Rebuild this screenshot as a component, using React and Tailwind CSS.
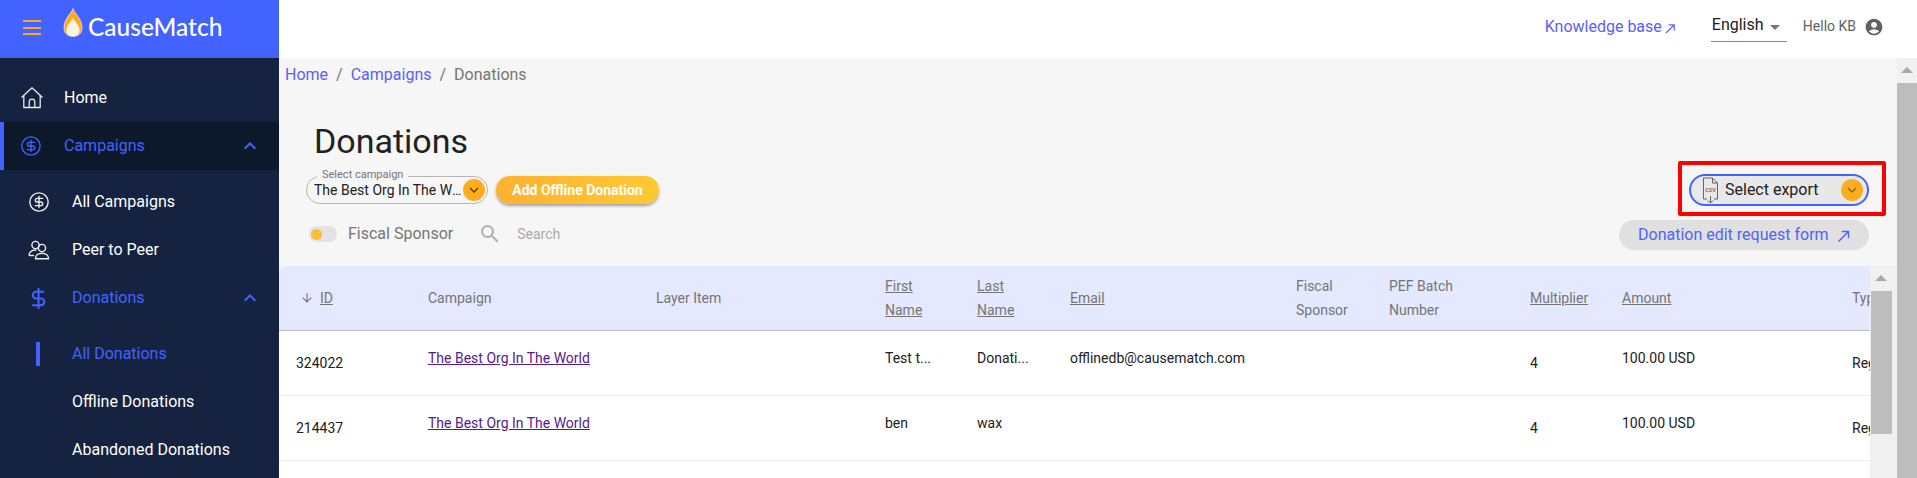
import React from "react";
import { CircleDollarSign, DollarSign } from "lucide-react";
import { MdAccountCircle, MdArrowDropDown, MdNorthEast, MdSearch, MdArrowDownward, MdExpandLess, MdExpandMore } from "react-icons/md";

const Flame = () => (
  <svg width="20" height="30" viewBox="0 0 20 30" className="shrink-0">
    <path d="M10 0.5C11 5 19 10.5 19 19.5C19 25.5 15 28.5 10 28.5C5 28.5 1 25.5 1 19.5C1 10.5 9 5 10 0.5Z" fill="#ffa91f" stroke="#fff" strokeWidth="0.6" />
    <path d="M10 10C12 14 16.5 17 16.5 22C16.5 26 13.5 28 10 28C6.5 28 3.5 26 3.5 22C3.5 17 8 14 10 10Z" fill="#fdf3e4" />
  </svg>
);

const HomeIcon = () => (
  <svg width="24" height="24" viewBox="0 0 24 24" fill="none" stroke="#e8e8e8" strokeWidth="1.3" strokeLinejoin="round" className="shrink-0">
    <path d="M1.5 11.5L12 1.8L22.5 11.5" />
    <path d="M3.8 9.5V21.5H20.2V9.5" />
    <path d="M9.2 21.5V16a2.8 2.8 0 0 1 5.6 0v5.5" />
  </svg>
);

const PeerIcon = () => (
  <svg width="22" height="20" viewBox="0 0 22 20" fill="none" stroke="#f0f0f0" strokeWidth="1.4" className="shrink-0">
    <circle cx="7.5" cy="5" r="3.6" />
    <circle cx="14" cy="8" r="3.6" />
    <path d="M1 15.5c0-3.5 3-5.5 6-5.5h1.5" />
    <path d="M1 15.5h5" />
    <path d="M7.5 18.7c0-3.5 3-5.5 6.5-5.5s6.5 2 6.5 5.5z" />
  </svg>
);

const CsvIcon = () => (
  <svg width="17" height="27" viewBox="0 0 17 27" fill="none" stroke="#555" strokeWidth="0.9" className="shrink-0">
    <path d="M1.5 18V1H10.5L15.5 6V18" />
    <path d="M10.5 1V6H15.5" />
    <path d="M1.5 18V22H5M12 22H15.5V18" />
    <text x="8.5" y="15" fontSize="5.5" fontWeight="700" fill="#8a6d6d" stroke="none" textAnchor="middle" fontFamily="Roboto, sans-serif">CSV</text>
    <path d="M8.5 19V26M6 23.5L8.5 26L11 23.5" />
  </svg>
);

const SideItem = ({ icon, label, active, bar, indent, chevron, dark }) => (
  <div className={`relative flex h-12 items-center text-[16px] ${dark ? "bg-[#0e182b]" : ""} ${active ? "text-[#4263ff]" : "text-white"} ${indent ? "pl-[28px]" : "pl-[20px]"}`}>
    {bar === "edge" && <span className="absolute left-0 top-0 h-full w-1 bg-[#4263ff]" />}
    {bar === "sub" && <span className="absolute left-9 top-3 h-6 w-1 bg-[#4263ff]" />}
    <span className="flex w-[44px] shrink-0 items-center">{icon}</span>
    <span>{label}</span>
    {chevron && <MdExpandLess className="absolute right-[17px] top-[12px] text-[#4263ff]" size={24} />}
  </div>
);

const cols = ["w-[132px]", "w-[228px]", "w-[229px]", "w-[92px]", "w-[93px]", "w-[226px]", "w-[93px]", "w-[141px]", "w-[92px]", "w-[230px]", "w-[100px]"];

const headers = [
  <span className="flex items-center"><MdArrowDownward size={14} className="ml-[4px] mr-[6px] text-[#757575]" /><u>ID</u></span>,
  "Campaign",
  "Layer Item",
  <u>First<br />Name</u>,
  <u>Last<br />Name</u>,
  <u>Email</u>,
  <>Fiscal<br />Sponsor</>,
  <>PEF Batch<br />Number</>,
  <u>Multiplier</u>,
  <u>Amount</u>,
  "Type",
];

const Cell = ({ i, top, children }) => (
  <div className={`${cols[i]} shrink-0 pl-[17px] ${top ? "pt-[15px]" : "pt-[20px]"}`}>{children}</div>
);

const Row = ({ id, first, last, email }) => (
  <div className="flex h-[65px] border-b border-[#ededed] bg-white text-[14px] leading-[24px] text-[#212121]">
    <Cell i={0}>{id}</Cell>
    <Cell i={1} top><a className="text-[#551a8b] underline">The Best Org In The World</a></Cell>
    <Cell i={2} top />
    <Cell i={3} top>{first}</Cell>
    <Cell i={4} top>{last}</Cell>
    <Cell i={5} top>{email}</Cell>
    <Cell i={6} top />
    <Cell i={7} top />
    <Cell i={8}>4</Cell>
    <Cell i={9} top>100.00 USD</Cell>
    <Cell i={10}>Regular</Cell>
  </div>
);

const OrangeDot = ({ dark }) => (
  <span className="flex h-[22px] w-[22px] shrink-0 items-center justify-center rounded-full bg-[#ffad1f]">
    <MdExpandMore size={18} className={dark ? "text-[#5a4210]" : "text-[#8a6a20]"} />
  </span>
);

export default function App() {
  return (
    <div className="flex h-[478px] w-[1917px] flex-col overflow-hidden bg-white font-['Roboto',sans-serif]">
      <header className="flex h-[58px] shrink-0">
        <div className="flex w-[279px] shrink-0 items-start bg-[#4263ff]">
          <div className="ml-[23px] mt-[20px] flex w-[18px] flex-col gap-[4.5px]">
            <span className="h-[2px] bg-[#ffa91f]" />
            <span className="h-[2px] bg-[#ffa91f]" />
            <span className="h-[2px] bg-[#ffa91f]" />
          </div>
          <div className="ml-[22px] mt-[8px] flex items-start">
            <Flame />
            <span className="ml-[5px] mt-[1px] font-['Lato',sans-serif] text-[24.5px] leading-[36px] font-medium text-white">CauseMatch</span>
          </div>
        </div>
        <div className="flex flex-1 items-center justify-end pb-[4px]">
          <a className="flex items-center text-[16px] text-[#5a60ff]">Knowledge base<MdNorthEast size={15} className="ml-[1px] mt-[2px]" /></a>
          <div className="ml-[33px] flex h-[42px] w-[76px] items-start self-start border-b border-[#8a8a8a] pl-[1px] pt-[15px] text-[16px] leading-[20px] text-[#212121]">
            <span>English</span>
            <MdArrowDropDown size={24} className="ml-[-1px] text-[#757575]" />
          </div>
          <span className="ml-4 mb-[2px] text-[14px] text-[#616161]">Hello KB</span>
          <MdAccountCircle size={20} className="ml-[8px] mr-[33px] text-[#616161]" />
        </div>
      </header>

      <div className="flex min-h-0 flex-1">
        <aside className="w-[279px] shrink-0 bg-[#152341] pt-[16px]">
          <SideItem icon={<HomeIcon />} label="Home" />
          <SideItem icon={<CircleDollarSign size={22} strokeWidth={1.5} />} label="Campaigns" active dark bar="edge" chevron />
          <div className="h-[8px]" />
          <SideItem indent icon={<CircleDollarSign size={22} strokeWidth={1.5} className="text-[#eee]" />} label="All Campaigns" />
          <SideItem indent icon={<PeerIcon />} label="Peer to Peer" />
          <SideItem indent icon={<DollarSign size={23} strokeWidth={2.2} className="ml-[-1px]" />} label="Donations" active chevron />
          <div className="h-[8px]" />
          <SideItem indent icon={null} label="All Donations" active bar="sub" />
          <SideItem indent icon={null} label="Offline Donations" />
          <SideItem indent icon={null} label="Abandoned Donations" />
        </aside>

        <main className="flex min-w-0 flex-1 flex-col bg-[#f6f6f6]">
          <div className="h-[208px] shrink-0">
            <nav className="flex h-[34px] items-center pl-[6px] text-[16px] text-[#757575]">
              <a className="text-[#5a60ff]">Home</a>
              <span className="mx-[8px]">/</span>
              <a className="text-[#5a60ff]">Campaigns</a>
              <span className="mx-[8px]">/</span>
              <span>Donations</span>
            </nav>
            <div className="flex justify-between">
              <div>
                <h1 className="ml-[35px] mt-[29px] text-[34px] leading-[40px] font-normal text-[#212121]">Donations</h1>
                <div className="ml-[27px] mt-[15px] flex items-center gap-2">
                  <div className="relative flex h-[28px] w-[182px] items-center rounded-full border border-[#b5b5b5] pl-[7px] pr-[2px]">
                    <span className="absolute left-[10px] top-[-9px] bg-[#f6f6f6] px-[5px] text-[11px] leading-[13px] text-[#757575]">Select campaign</span>
                    <span className="min-w-0 flex-1 truncate text-[14px] text-[#212121]">The Best Org In The World</span>
                    <OrangeDot dark />
                  </div>
                  <button className="h-[28px] w-[163px] rounded-full bg-gradient-to-r from-[#ffb12f] to-[#ffc933] text-[14px] font-bold text-white shadow-[0_2px_3px_rgba(0,0,0,0.35)]">Add Offline Donation</button>
                </div>
                <div className="ml-[30px] mt-[18px] flex items-center">
                  <span className="flex h-4 w-7 items-center rounded-full bg-[#e3e3e3] pl-[2px]">
                    <span className="h-[11px] w-[11px] rounded-full bg-[#ffbd30]" />
                  </span>
                  <span className="ml-[11px] text-[16px] text-[#757575]">Fiscal Sponsor</span>
                  <MdSearch size={24} className="ml-[25px] text-[#b0b0b0]" />
                  <span className="ml-[15px] text-[14px] text-[#aaaaaa]">Search</span>
                </div>
              </div>
              <div className="mr-[11px] mt-[69px] flex flex-col items-end">
                <div className="h-[55px] w-[208px] rounded-[2px] border-4 border-[#ff0000] pb-[6px] pl-[7px] pr-[13px] pt-[9px]">
                  <div className="flex h-[32px] w-[180px] items-center rounded-full border-2 border-[#4263ff] bg-[#e8e8e8] pl-[11px] pr-[4px]">
                    <CsvIcon />
                    <span className="ml-[6px] flex-1 text-[16px] text-[#212121]">Select export</span>
                    <OrangeDot />
                  </div>
                </div>
                <a className="mr-[17px] mt-1 flex h-[30px] w-[250px] items-center rounded-full bg-[#e0e0e0] pl-[19px] text-[16px] text-[#4f63ff]">
                  Donation edit request form
                  <MdNorthEast size={18} className="ml-[6px] mt-[2px]" />
                </a>
              </div>
            </div>
          </div>

          <div className="flex min-h-0 flex-1">
            <div className="min-w-0 flex-1 overflow-hidden rounded-tl-[6px] bg-white">
              <div className="flex h-[65px] border-b border-[#bdbdbd] bg-[#e4e9ff] text-[14px] leading-[24px] text-[#757575]">
                {headers.map((h, i) => (
                  <div key={i} className={`${cols[i]} flex shrink-0 items-center pl-[17px]`}><div>{h}</div></div>
                ))}
              </div>
              <Row id="324022" first="Test t..." last="Donati..." email="offlinedb@causematch.com" />
              <Row id="214437" first="ben" last="wax" email="" />
            </div>
            <div className="flex w-[27px] shrink-0 flex-col items-center bg-[#f0f0f0] pr-[5px]">
              <span className="mt-[9px] h-0 w-0 border-x-[6px] border-b-[6px] border-x-transparent border-b-[#a8a8a8]" />
              <span className="mt-[10px] h-[143px] w-[21px] bg-[#bdbdbd]" />
            </div>
          </div>
        </main>

        <div className="flex w-[20px] shrink-0 flex-col items-center bg-[#f1f1f1]">
          <span className="mt-[9px] h-0 w-0 border-x-[6px] border-b-[6px] border-x-transparent border-b-[#a8a8a8]" />
          <span className="mt-[10px] w-full flex-1 bg-[#bdbdbd]" />
        </div>
      </div>
    </div>
  );
}
